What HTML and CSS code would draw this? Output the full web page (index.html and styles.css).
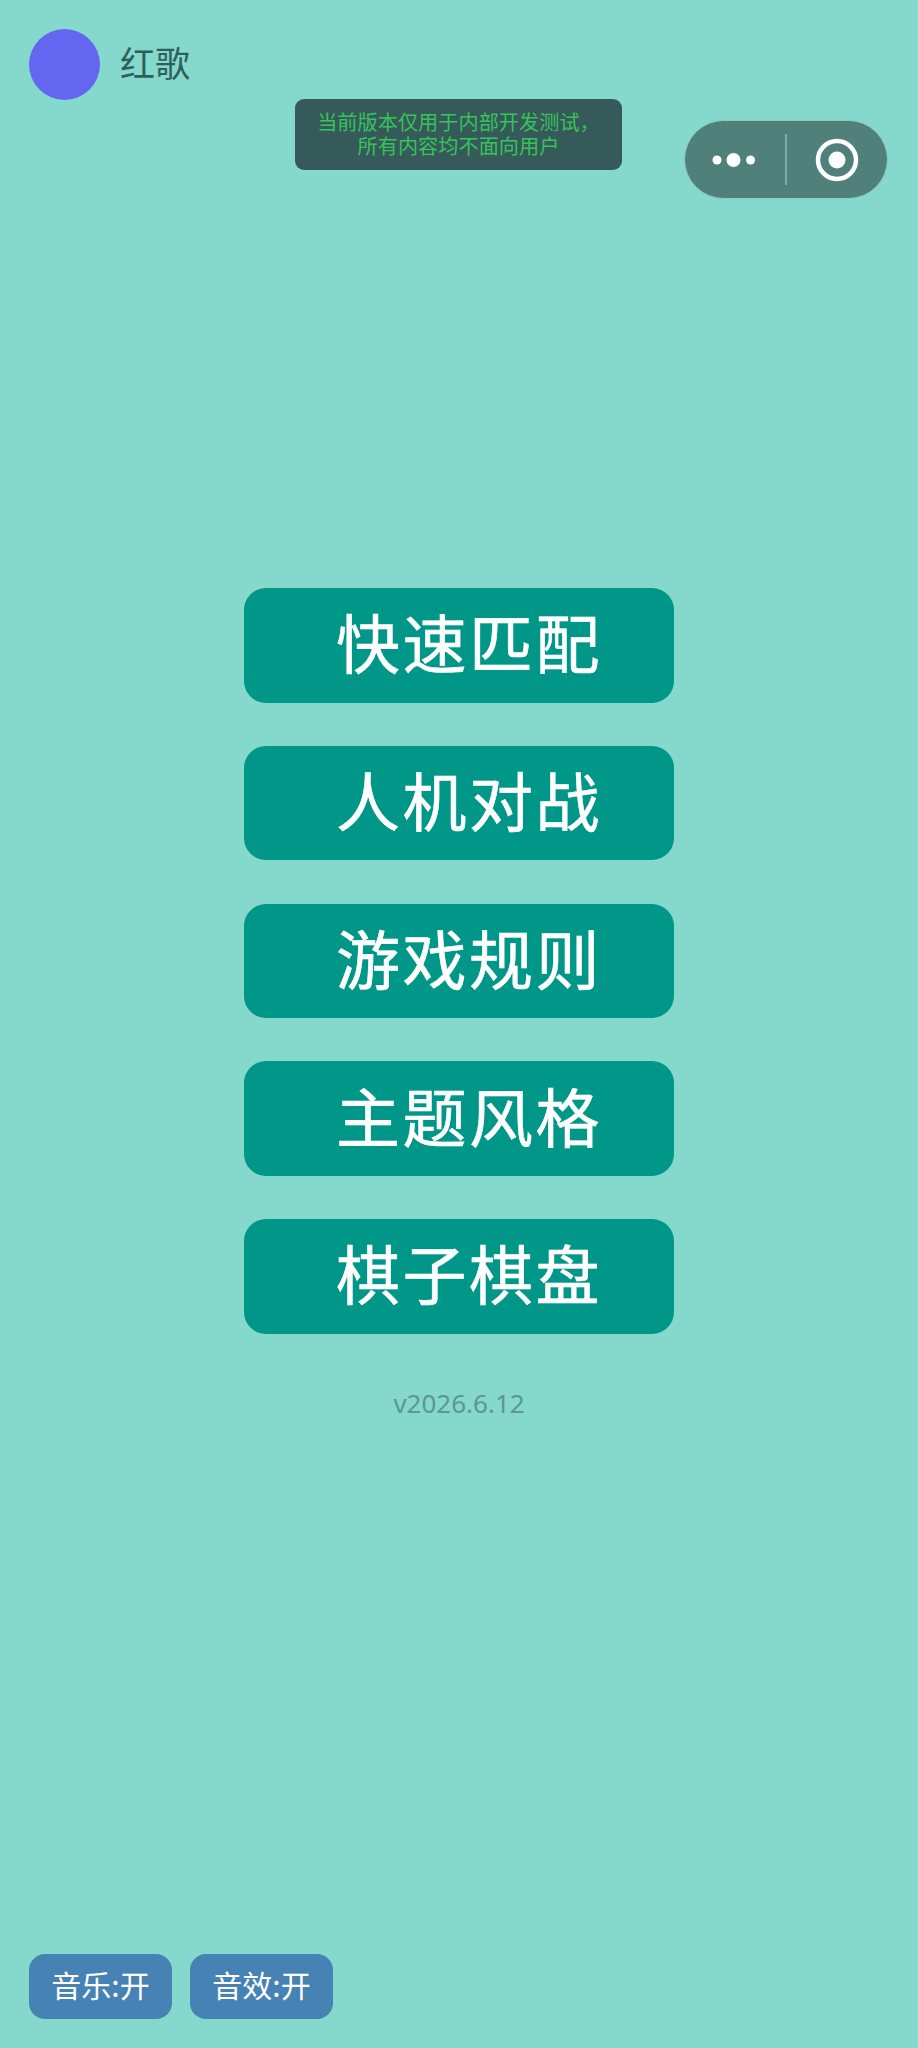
FILE: index.html
```html
<!DOCTYPE html>
<html lang="zh-CN">
<head>
  <meta charset="UTF-8" />
  <title>红歌</title>
  <meta name="viewport" content="width=device-width, initial-scale=1.0" />
  <link rel="stylesheet" href="styles.css">
</head>
<body>
  <div class="container">
    <div class="user">
      <div class="avatar"></div>
      <div class="user-name">红歌</div>
    </div>

    <div class="dev-notice">当前版本仅用于内部开发测试，<br>所有内容均不面向用户</div>

    <div class="capsule">
      <div class="capsule-part">
        <svg class="capsule-dots" width="44" height="20" viewBox="0 0 44 20">
          <circle cx="5" cy="10" r="4.5" fill="#fff" />
          <circle cx="21.5" cy="10" r="7" fill="#fff" />
          <circle cx="38.5" cy="10" r="4.5" fill="#fff" />
        </svg>
      </div>
      <div class="capsule-line"></div>
      <div class="capsule-part">
        <svg width="44" height="44" viewBox="0 0 44 44">
          <circle cx="22" cy="22" r="19" fill="none" stroke="#fff" stroke-width="4.5" />
          <circle cx="22" cy="22" r="8.5" fill="#fff" />
        </svg>
      </div>
    </div>

    <div class="menu">
      <button class="menu-btn">快速匹配</button>
      <button class="menu-btn">人机对战</button>
      <button class="menu-btn">游戏规则</button>
      <button class="menu-btn">主题风格</button>
      <button class="menu-btn">棋子棋盘</button>
    </div>

    <div class="version">v2026.6.12</div>

    <div class="footer">
      <button class="sound-btn">音乐:开</button>
      <button class="sound-btn">音效:开</button>
    </div>
  </div>
</body>
</html>
```

FILE: styles.css
```css
* {
  box-sizing: border-box;
}

body {
  margin: 0;
  background-color: #84d8cc;
  font-family: "Noto Sans CJK SC", "Noto Sans", sans-serif;
}

.container {
  position: relative;
  display: flex;
  flex-direction: column;
  height: 2048px;
  padding: 29px;
}

.user {
  display: flex;
  align-items: center;
  gap: 20px;
}

.avatar {
  width: 71px;
  height: 71px;
  border-radius: 50%;
  background-color: #6366f1;
}

.user-name {
  padding-bottom: 5px;
  font-size: 35px;
  line-height: 46px;
  color: #2f5f5b;
}

.dev-notice {
  position: absolute;
  left: 295px;
  top: 99px;
  width: 327px;
  height: 71px;
  padding-top: 11px;
  border-radius: 9px;
  background-color: #36595a;
  color: #35c35a;
  font-size: 20.2px;
  line-height: 24px;
  text-align: center;
}

.capsule {
  position: absolute;
  left: 684px;
  top: 120px;
  width: 204px;
  height: 79px;
  display: flex;
  align-items: center;
  border: 1.5px solid #93c9c0;
  border-radius: 40px;
  background-color: #50807a;
}

.capsule-part {
  flex: 1;
  display: flex;
  align-items: center;
  justify-content: center;
}

.capsule-dots {
  margin-right: 2px;
}

.capsule-line {
  width: 2px;
  height: 51px;
  background-color: #80aaa4;
}

.menu {
  display: flex;
  flex-direction: column;
  align-items: center;
  gap: 43.25px;
  margin-top: 488px;
}

.menu-btn {
  width: 430px;
  height: 114.5px;
  padding: 0 0 10px 20px;
  border: none;
  border-radius: 22px;
  background-color: #009688;
  color: #fff;
  font-family: inherit;
  font-size: 64px;
  letter-spacing: 2.5px;
  -webkit-text-stroke: 0.6px #fff;
}

.version {
  margin-top: 49px;
  font-size: 26px;
  line-height: 40px;
  color: #5d9693;
  text-align: center;
  font-family: "Noto Sans", sans-serif;
}

.footer {
  display: flex;
  gap: 18px;
  margin-top: auto;
}

.sound-btn {
  width: 143px;
  height: 65px;
  padding: 0 0 5px;
  border: none;
  border-radius: 16px;
  background-color: #4682b4;
  color: #fff;
  font-family: inherit;
  font-size: 30px;
}
```
